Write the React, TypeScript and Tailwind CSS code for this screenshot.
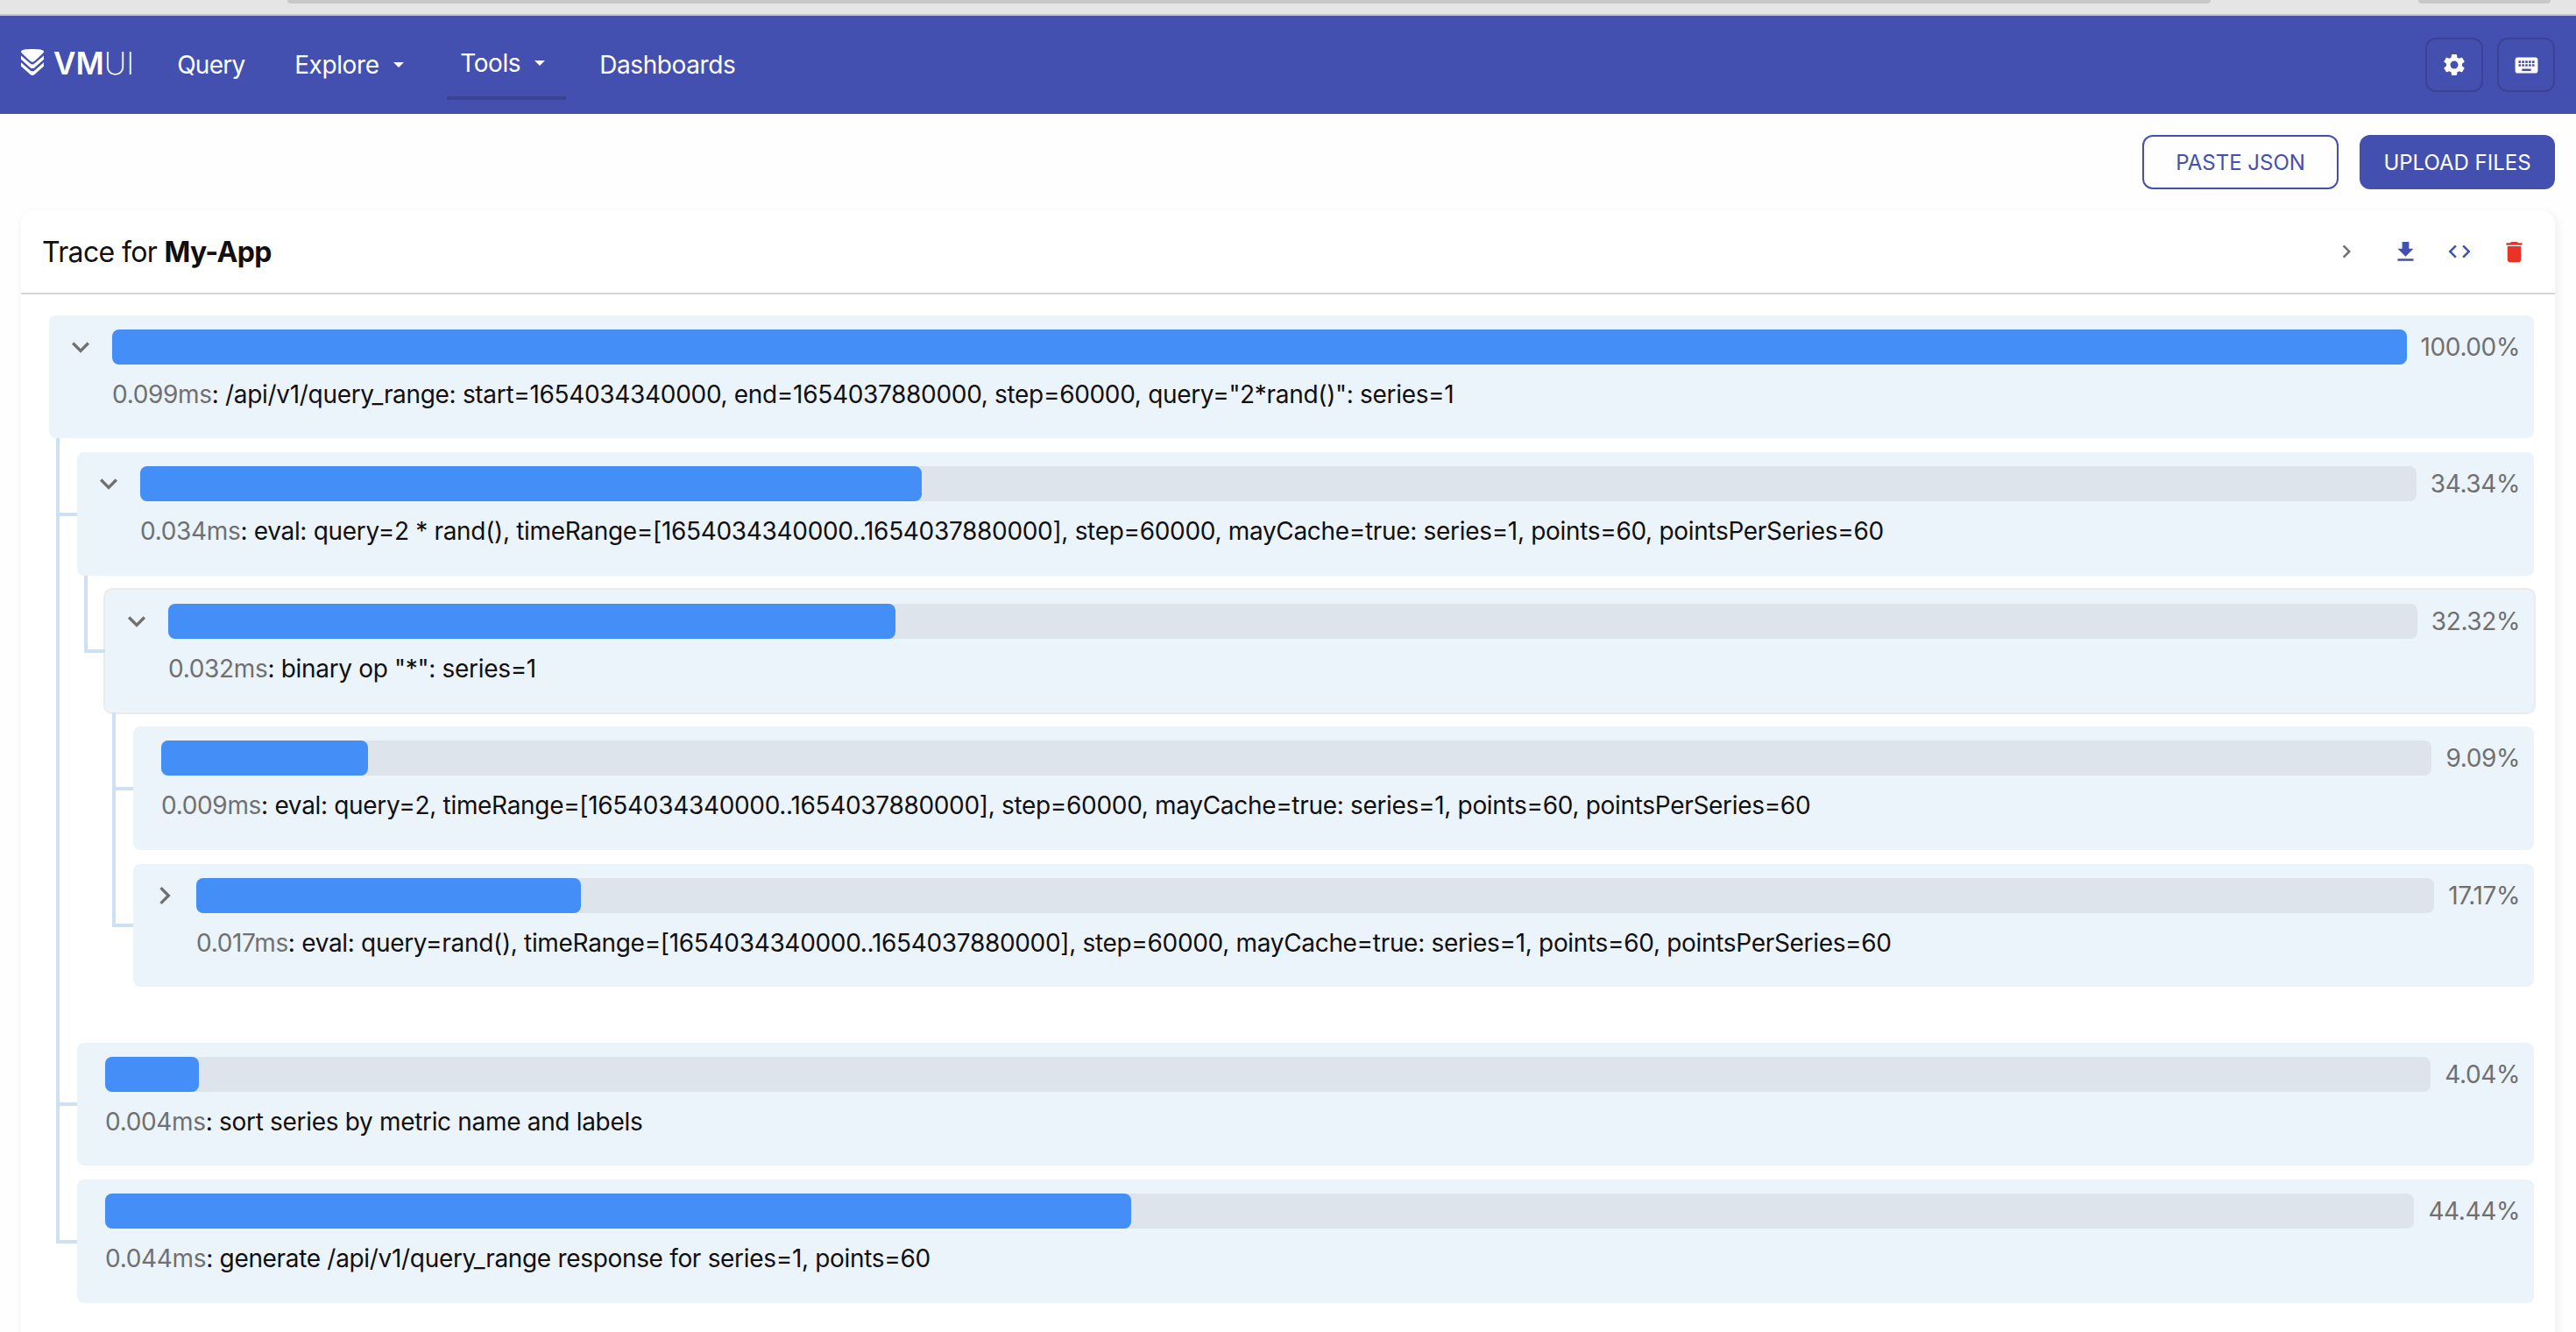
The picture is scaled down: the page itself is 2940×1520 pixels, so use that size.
import { useState } from 'react';
import { MdSettings, MdKeyboard, MdFileDownload, MdCode, MdDelete } from 'react-icons/md';

interface TraceNode {
  id: string;
  duration: string;
  message: string;
  percent: number;
  active?: boolean;
  children?: TraceNode[];
}

const trace: TraceNode = {
  id: 'query-range',
  duration: '0.099ms',
  message: '/api/v1/query_range: start=1654034340000, end=1654037880000, step=60000, query="2*rand()": series=1',
  percent: 100,
  children: [
    {
      id: 'eval-mul',
      duration: '0.034ms',
      message:
        'eval: query=2 * rand(), timeRange=[1654034340000..1654037880000], step=60000, mayCache=true: series=1, points=60, pointsPerSeries=60',
      percent: 34.34,
      children: [
        {
          id: 'binary-op',
          duration: '0.032ms',
          message: 'binary op "*": series=1',
          percent: 32.32,
          active: true,
          children: [
            {
              id: 'eval-2',
              duration: '0.009ms',
              message:
                'eval: query=2, timeRange=[1654034340000..1654037880000], step=60000, mayCache=true: series=1, points=60, pointsPerSeries=60',
              percent: 9.09,
            },
            {
              id: 'eval-rand',
              duration: '0.017ms',
              message:
                'eval: query=rand(), timeRange=[1654034340000..1654037880000], step=60000, mayCache=true: series=1, points=60, pointsPerSeries=60',
              percent: 17.17,
              children: [],
            },
          ],
        },
      ],
    },
    {
      id: 'sort',
      duration: '0.004ms',
      message: 'sort series by metric name and labels',
      percent: 4.04,
    },
    {
      id: 'generate',
      duration: '0.044ms',
      message: 'generate /api/v1/query_range response for series=1, points=60',
      percent: 44.44,
    },
  ],
};

function Chevron({ open, className }: { open: boolean; className: string }) {
  return (
    <svg viewBox="0 0 24 24" className={className} fill="currentColor">
      {open ? (
        <path d="M7.41 8.59 12 13.17l4.59-4.58L18 10l-6 6-6-6z" />
      ) : (
        <path d="M8.59 16.59 13.17 12 8.59 7.41 10 6l6 6-6 6z" />
      )}
    </svg>
  );
}

function NestedNode({ node }: { node: TraceNode }) {
  const [open, setOpen] = useState(!!node.children?.length);
  const expandable = !!node.children;

  return (
    <div>
      <div
        className={`flex h-[140.4px] rounded-lg bg-[#ebf3fb] pt-4 pr-4 ${expandable ? '' : 'pl-8'} ${
          node.active ? 'ring-2 ring-[#ebebeb]' : ''
        }`}
      >
        {expandable && (
          <button onClick={() => setOpen(!open)} className="flex h-10 w-[72px] items-center justify-center text-[#707070]">
            <Chevron open={open} className="size-10" />
          </button>
        )}
        <div className="min-w-0 flex-1">
          <div className="flex h-10 items-center gap-4">
            <div className="h-10 flex-1 rounded-lg bg-[#dde4eb]">
              <div className="h-10 rounded-lg bg-[#448ef7]" style={{ width: `${node.percent}%` }} />
            </div>
            <span className="text-[28px] leading-10 tracking-[-0.4px] text-[#707070]">{node.percent.toFixed(2)}%</span>
          </div>
          <p className="mt-4 text-[28px] leading-9 tracking-[-0.32px] whitespace-nowrap text-[#110f0f]">
            <span className="text-[#707070]">{node.duration}</span>: {node.message}
          </p>
        </div>
      </div>
      {open && node.children && (
        <div className="ml-2 pb-6">
          {node.children.map((child, i) => (
            <div key={child.id} className="flex">
              {/* Connector lines */}
              <div className="relative z-10 flex w-6 flex-col">
                <div className="h-[88.4px] border-b-4 border-l-4 border-[#cee1f3]" />
                {i < node.children!.length - 1 && <div className="flex-1 border-l-4 border-[#cee1f3]" />}
              </div>
              <div className="min-w-0 flex-1 pt-4">
                <NestedNode node={child} />
              </div>
            </div>
          ))}
        </div>
      )}
    </div>
  );
}

function Logo() {
  return (
    <div className="flex items-center gap-[11px] pb-1.5">
      <svg viewBox="0 0 26 30" className="h-[30px] w-[26px]" fill="white">
        <path d="M13 0C6.500 0 0 .8 0 2.600c0 1.200 1 2.300 2 3.200l8.600 7.900c1.500 1.300 3.300 1.300 4.800 0L24 5.800c1-.9 2-2 2-3.200C26 .8 19.500 0 13 0z" />
        <path d="M0 7.500v4.200l10.600 9.500c1.500 1.200 3.300 1.200 4.800 0L26 11.700V7.500l-10.600 9c-1.500 1.200-3.300 1.200-4.800 0z" />
        <path d="M0 15.200v4.200l10.600 9.700c1.500 1.200 3.300 1.200 4.800 0L26 19.400v-4.200l-10.600 9.200c-1.500 1.200-3.300 1.200-4.800 0z" />
      </svg>
      <span className="pt-[3px] text-[35px] leading-none">
        <span className="font-semibold">VM</span>
        <span className="font-extralight">UI</span>
      </span>
    </div>
  );
}

function Caret() {
  return (
    <svg viewBox="0 0 12 6" className="h-1.5 w-3" fill="currentColor">
      <path d="M0 0h12L6 6z" />
    </svg>
  );
}

function Header() {
  return (
    <header className="flex h-28 items-center bg-[#4450af] px-6 text-[28px] text-white">
      <Logo />
      <nav className="ml-[49px] flex flex-1 items-center tracking-[-0.4px]">
        <a className="w-[134px] tracking-[-0.7px]">Query</a>
        <a className="flex w-[174px] items-center gap-4">
          Explore
          <Caret />
        </a>
        <a className="flex h-20 w-[136px] items-center gap-4 border-b-4 border-[#3b4493] pl-[15px]">
          Tools
          <Caret />
        </a>
        <a className="ml-[38px]">Dashboards</a>
      </nav>
      <div className="flex gap-4">
        <button className="flex h-[62px] w-[66px] items-center justify-center rounded-xl border-2 border-[#3b4493]">
          <MdSettings className="size-[30px]" />
        </button>
        <button className="flex h-[62px] w-[66px] items-center justify-center rounded-xl border-2 border-[#3b4493]">
          <MdKeyboard className="size-[31px]" />
        </button>
      </div>
    </header>
  );
}

export default function App() {
  return (
    <div className="h-[1520px] w-[2940px] overflow-hidden bg-[#fefeff] font-['Inter',sans-serif]">
      {/* Bottom edge of the browser toolbar */}
      <div className="flex h-[18px] items-start border-b-2 border-[#c4c4c4] bg-[#e5e5e5]">
        <div className="ml-[328px] h-1 w-[2195px] rounded-b-full bg-[#c8c8c8]" />
        <div className="ml-[237px] h-1 w-[151px] rounded-b-full bg-[#c8c8c8]" />
      </div>
      <Header />

      <div className="flex justify-end gap-6 px-6 py-6 text-2xl">
        <button className="h-[62px] w-56 rounded-xl border-2 border-[#4450af] pt-0.5 text-[#4450af]">PASTE JSON</button>
        <button className="h-[62px] w-[223px] rounded-xl bg-[#4450af] pt-0.5 text-white">UPLOAD FILES</button>
      </div>

      <section className="mx-6 h-[1400px] rounded-2xl bg-white shadow-[2px_4px_12px_rgba(0,0,0,0.08)]">
        <div className="flex h-24 items-center border-b-2 border-[#d6d6d6] pr-4 pl-6">
          <h2 className="flex-1 pt-0.5 text-[32px] tracking-[-0.65px] text-[#110f0f]">
            Trace for <b className="font-bold">My-App</b>
          </h2>
          <div className="flex items-center text-[#4450af]">
            <button className="mr-[21px] text-[#707070]">
              <Chevron open={false} className="size-[30px]" />
            </button>
            <button className="flex w-[62px] justify-center">
              <MdFileDownload className="size-[31px]" />
            </button>
            <button className="flex w-[62px] justify-center">
              <MdCode className="size-[30px]" />
            </button>
            <button className="flex w-[62px] justify-center text-[#e93326]">
              <MdDelete className="size-[31px]" />
            </button>
          </div>
        </div>
        <div className="pt-6 pr-6 pl-8">
          <NestedNode node={trace} />
        </div>
      </section>
    </div>
  );
}
